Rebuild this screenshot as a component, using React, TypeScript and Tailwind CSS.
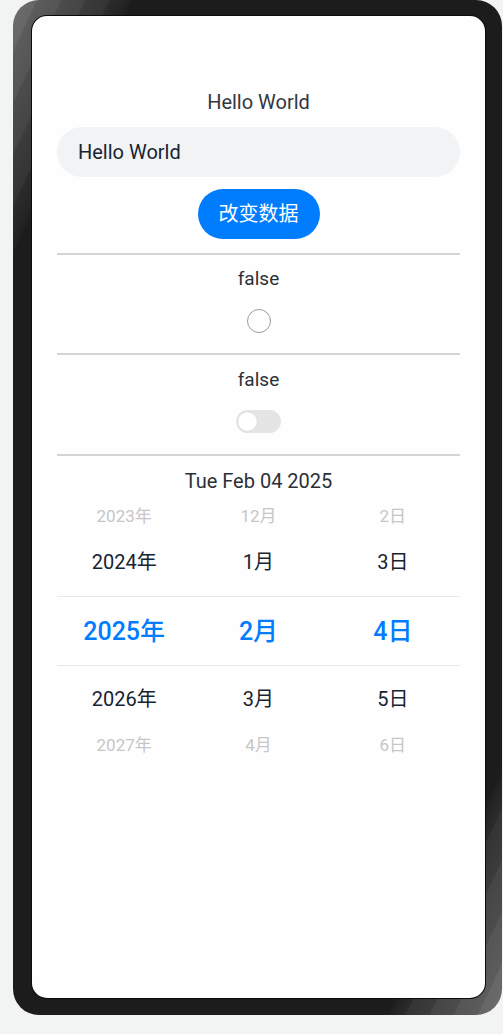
const FONT = "font-['Roboto','Noto_Sans_CJK_SC',sans-serif]";

const ROWS = [
  { y: "2023年", m: "12月", d: "2日", kind: "far", h: "h-[23px]" },
  { y: "2024年", m: "1月", d: "3日", kind: "near", h: "h-[68px]" },
  { y: "2025年", m: "2月", d: "4日", kind: "sel", h: "h-[70px]" },
  { y: "2026年", m: "3月", d: "5日", kind: "near", h: "h-[66px]" },
  { y: "2027年", m: "4月", d: "6日", kind: "far", h: "h-[26px]" },
];

function PickerRow({ row }: { row: (typeof ROWS)[number] }) {
  const text =
    row.kind === "sel"
      ? "text-[25px] font-medium text-[#007dff]"
      : row.kind === "near"
      ? "text-[20px] text-[#182431]"
      : "text-[17px] text-[#c6c6c6]";
  return (
    <div
      className={`grid grid-cols-3 items-center ${row.h} ${
        row.kind === "sel" ? "border-y border-[#e9e9e9]" : ""
      }`}
    >
      {[row.y, row.m, row.d].map((v) => (
        <div key={v} className={`text-center leading-none ${text}`}>
          {v}
        </div>
      ))}
    </div>
  );
}

export default function App() {
  return (
    <div className={`min-h-[1034px] bg-[#f2f3f3] pl-[13px] ${FONT}`}>
      <div className="h-[1015px] w-[489px] rounded-[26px] bg-[linear-gradient(115deg,#6e6e6e_0%,#666_2.5%,#5c5c5c_2.5%,#555_5%,#4c4c4c_5%,#454545_7.5%,#3c3c3c_7.5%,#343434_10%,#2c2c2c_10%,#222_12%,#1c1c1c_12.5%,#1c1c1c_88%,#222_88.5%,#2c2c2c_90%,#343434_90%,#3c3c3c_92.5%,#454545_92.5%,#4c4c4c_95%,#555_95%,#5c5c5c_97.5%,#666_97.5%,#6e6e6e_100%)] pb-[17px] pl-[19px] pr-[17px] pt-[16px]">
        <div className="flex h-full flex-col rounded-[15px] bg-[#fefefe] px-[25px] shadow-[0_0_0_1px_#0b0b0b]">
          <div className="mt-[72px] flex h-[28px] items-center justify-center text-[20px] text-[#33383f]">
            Hello World
          </div>
          <div className="mt-[11px] flex h-[50px] items-center rounded-full bg-[#f1f3f5] px-[21px] text-[20px] text-[#182431]">
            Hello World
          </div>
          <div className="mt-[12px] flex justify-center">
            <button className="h-[50px] w-[122px] rounded-full bg-[#007dff] text-[20px] text-white">
              改变数据
            </button>
          </div>
          <div className="mt-[14px] h-[2px] bg-[#d4d4d4]" />
          <div className="mt-[10px] flex h-[28px] items-center justify-center text-[19px] text-[#2b3038]">
            false
          </div>
          <div className="mt-[16px] flex justify-center">
            <div className="h-[24px] w-[24px] rounded-full border border-[#9c9c9c]" />
          </div>
          <div className="mt-[20px] h-[2px] bg-[#d4d4d4]" />
          <div className="mt-[11px] flex h-[28px] items-center justify-center text-[19px] text-[#2b3038]">
            false
          </div>
          <div className="mt-[16px] flex justify-center">
            <div className="flex h-[23px] w-[45px] items-center rounded-full bg-[#e5e5e5] px-[2px]">
              <div className="h-[19px] w-[19px] rounded-full bg-white shadow-[0_0_1px_rgba(0,0,0,0.2)]" />
            </div>
          </div>
          <div className="mt-[21px] h-[2px] bg-[#d4d4d4]" />
          <div className="mt-[11px] flex h-[28px] items-center justify-center text-[20px] text-[#2b3038]">
            Tue Feb 04 2025
          </div>
          <div className="mt-[10px] flex flex-col">
            {ROWS.map((r) => (
              <PickerRow key={r.y} row={r} />
            ))}
          </div>
        </div>
      </div>
    </div>
  );
}
